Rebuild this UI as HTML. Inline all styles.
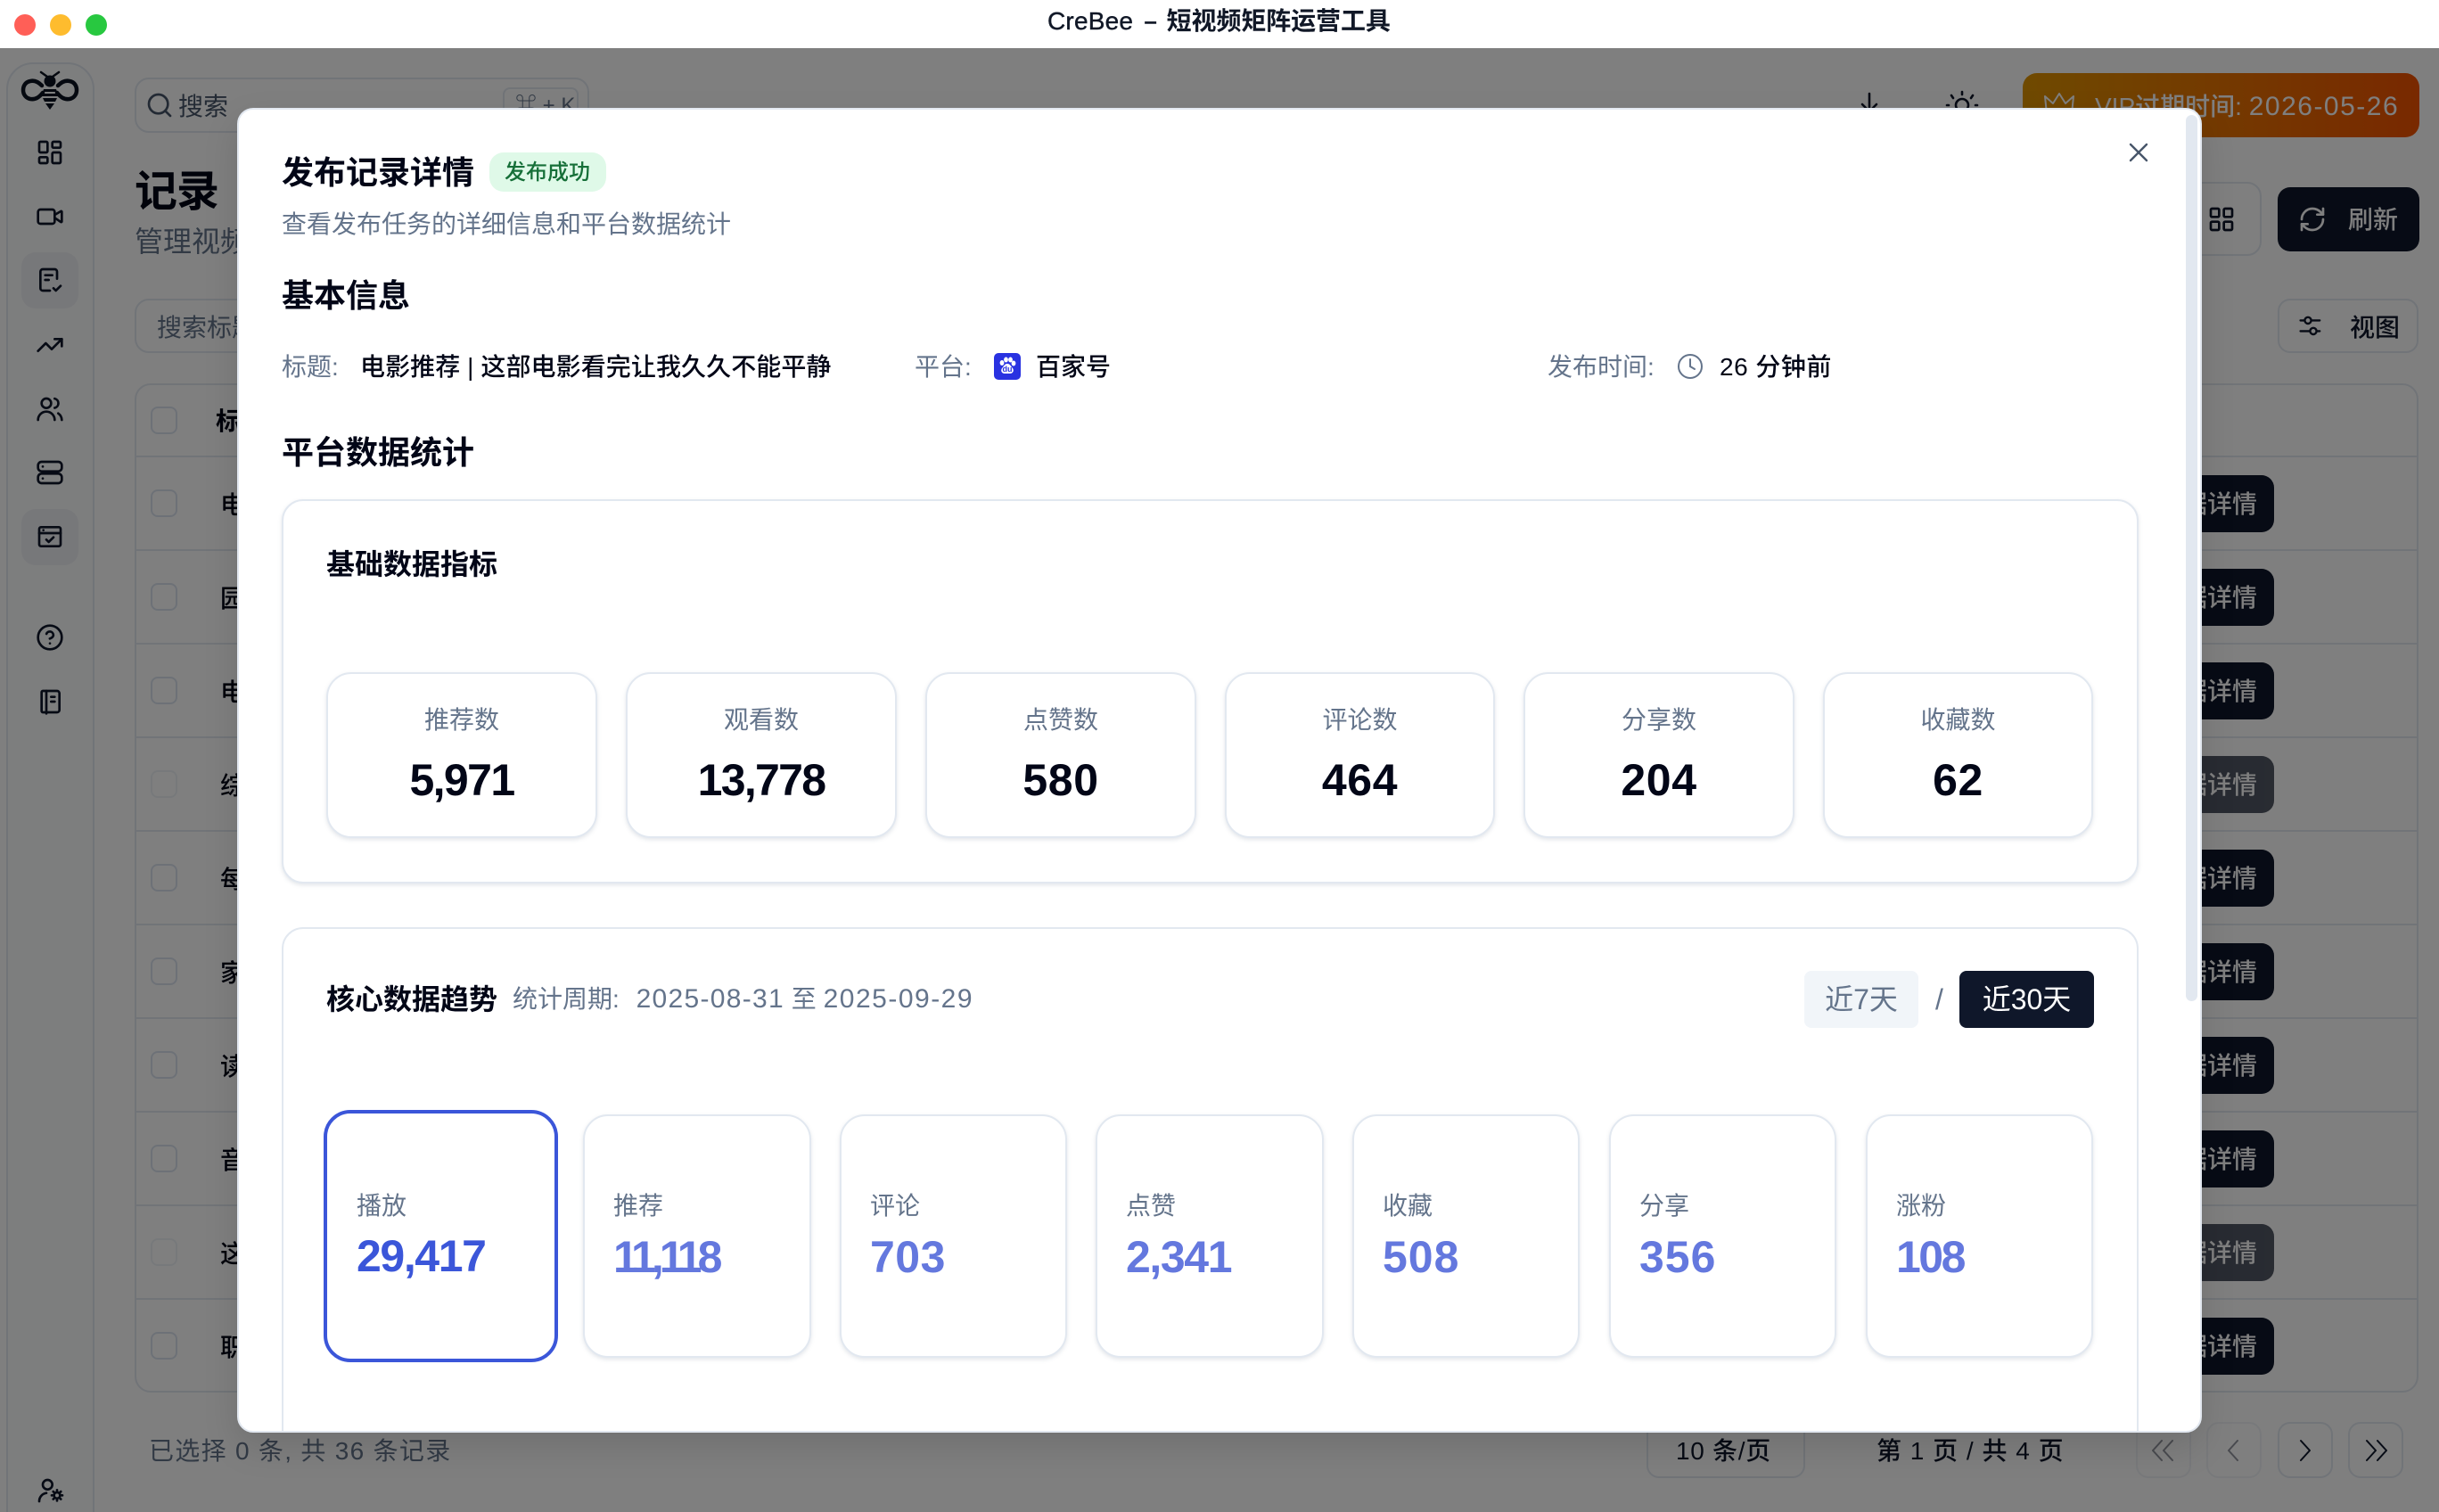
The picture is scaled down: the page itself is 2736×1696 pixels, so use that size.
<!DOCTYPE html>
<html lang="zh">
<head>
<meta charset="utf-8">
<title>CreBee - 短视频矩阵运营工具</title>
<style>
html,body{margin:0;padding:0;width:2736px;height:1696px;overflow:hidden;background:#fff}
body{position:relative;font-family:"Liberation Sans","Noto Sans CJK SC",sans-serif;color:#0f172a}
div,span{box-sizing:border-box}
.a{position:absolute}
.t{position:absolute;white-space:nowrap;line-height:40px;height:40px;font-size:28px;transform:translateY(2px)}
.m{font-weight:500}
.b{font-weight:700}
.g{color:#64748b}
.bd{border:2px solid #e2e8f0}
#app{position:absolute;left:0;top:54px;width:2736px;height:1642px}
#bg{position:absolute;left:0;top:0;width:2736px;height:1696px}
#ov{position:absolute;left:0;top:54px;width:2736px;height:1642px;background:rgba(0,0,0,.5)}
#tb{position:absolute;left:0;top:0;width:2736px;height:54px;background:#fff}
.dot{position:absolute;top:16px;width:24px;height:24px;border-radius:50%}
#modal{position:absolute;left:266px;top:121px;width:2204px;height:1486px;background:#fff;border:2px solid #e2e8f0;border-radius:18px;overflow:hidden;box-shadow:0 16px 40px rgba(0,0,0,.12)}
#in{position:absolute;left:-268px;top:-123px;width:2736px;height:1696px}
.sc{position:absolute;background:#fff;border:2px solid #e2e8f0;border-radius:28px;box-shadow:0 2px 5px rgba(100,116,139,.18)}
.lab{position:absolute;left:0;right:0;text-align:center;line-height:40px;font-size:28px;color:#64748b}
.val{position:absolute;left:0;right:0;text-align:center;line-height:60px;font-size:50px;font-weight:700;color:#020617;letter-spacing:.6px}
.tl{position:absolute;left:32px;top:81px;line-height:40px;font-size:28px;color:#64748b;white-space:nowrap}
.tv{position:absolute;left:32px;top:128px;line-height:60px;font-size:50px;font-weight:700;color:#6478de;white-space:nowrap}
.btn{position:absolute;left:2360px;width:191px;height:64px;background:#0f172a;border-radius:14px;color:#fff;font-size:28px;line-height:66px;font-weight:500;text-align:right;padding-right:19px}
.cb{position:absolute;left:169px;width:30px;height:31px;border:2px solid #dbe3ef;border-radius:8px;background:#fff}
.line{position:absolute;left:151px;width:2562px;height:2px;background:#e2e8f0}
.rt{position:absolute;left:247px;line-height:40px;font-size:28px;font-weight:500;white-space:nowrap;color:#020617;transform:translateY(2px)}
.pg{position:absolute;top:1595px;width:62px;height:63px;border:2px solid #e2e8f0;border-radius:14px;background:#fff}
</style>
</head>
<body>
<div id="app"></div>
<div id="bg">
  <!-- sidebar -->
  <div class="a" style="left:7px;top:70px;width:99px;height:1660px;border:2px solid #e2e8f0;border-radius:30px;background:#fbfcfd"></div>
  <div class="a" style="left:24px;top:283px;width:64px;height:63px;border-radius:16px;background:#eff1f4"></div>
  <div class="a" style="left:24px;top:571px;width:64px;height:63px;border-radius:16px;background:#eff1f4"></div>

  <!-- search -->
  <div class="a bd" style="left:151px;top:87px;width:510px;height:62px;border-radius:16px;background:#fff"></div>
  <div class="t g" style="left:200px;top:98px;color:#475569">搜索</div>
  <div class="a bd" style="left:564px;top:98px;width:85px;height:42px;border-radius:8px"></div>
  <div class="t" style="left:578px;top:97px;font-size:24px;color:#64748b">⌘ + K</div>

  <!-- VIP -->
  <div class="a" style="left:2269px;top:82px;width:445px;height:72px;border-radius:16px;background:linear-gradient(90deg,#df9400,#f25200)"></div>
  <div class="t" style="left:2350px;top:98px;font-size:28px;font-weight:500;color:#fff">VIP过期时间: <span style="font-size:30px;letter-spacing:1.5px">2026-05-26</span></div>

  <!-- heading -->
  <div class="t b" style="left:151px;top:186px;font-size:48px;line-height:56px;height:56px;color:#020617;letter-spacing:-1px">记录</div>
  <div class="t" style="left:151px;top:249px;font-size:32px;color:#64748b">管理视频发布记录</div>

  <!-- toolbar -->
  <div class="a bd" style="left:2300px;top:204px;width:237px;height:83px;border-radius:16px"></div>
  <div class="a" style="left:2555px;top:210px;width:159px;height:72px;border-radius:14px;background:#0f172a"></div>
  <div class="t m" style="left:2634px;top:225px;color:#fff">刷新</div>
  <div class="a bd" style="left:151px;top:335px;width:500px;height:61px;border-radius:16px"></div>
  <div class="t" style="left:176px;top:346px;color:#64748b">搜索标题</div>
  <div class="a bd" style="left:2555px;top:335px;width:158px;height:61px;border-radius:14px"></div>
  <div class="t m" style="left:2636px;top:346px;color:#0f172a">视图</div>

  <!-- table -->
  <div class="a bd" style="left:151px;top:430px;width:2562px;height:1132px;border-radius:18px"></div>
  <div class="line" style="top:511px"></div><div class="line" style="top:616px"></div><div class="line" style="top:721px"></div><div class="line" style="top:826px"></div><div class="line" style="top:931px"></div><div class="line" style="top:1036px"></div><div class="line" style="top:1141px"></div><div class="line" style="top:1246px"></div><div class="line" style="top:1351px"></div><div class="line" style="top:1456px"></div>
  <div class="cb" style="top:456px"></div><div class="rt" style="left:242px;top:451px;font-weight:700">标题</div>
  <div class="cb" style="top:549px"></div><div class="rt" style="top:545px">电影推荐</div>
  <div class="cb" style="top:654px"></div><div class="rt" style="top:650px">园艺</div>
  <div class="cb" style="top:759px"></div><div class="rt" style="top:755px">电影</div>
  <div class="cb" style="top:864px;opacity:.45"></div><div class="rt" style="top:860px">综艺</div>
  <div class="cb" style="top:969px"></div><div class="rt" style="top:965px">每日</div>
  <div class="cb" style="top:1074px"></div><div class="rt" style="top:1070px">家居</div>
  <div class="cb" style="top:1179px"></div><div class="rt" style="top:1175px">读书</div>
  <div class="cb" style="top:1284px"></div><div class="rt" style="top:1280px">音乐</div>
  <div class="cb" style="top:1389px;opacity:.45"></div><div class="rt" style="top:1385px">这部</div>
  <div class="cb" style="top:1494px"></div><div class="rt" style="top:1490px">职场</div>

  <div class="btn" style="top:533px">数据详情</div>
  <div class="btn" style="top:638px">数据详情</div>
  <div class="btn" style="top:743px">数据详情</div>
  <div class="btn" style="top:848px;opacity:.72">数据详情</div>
  <div class="btn" style="top:953px">数据详情</div>
  <div class="btn" style="top:1058px">数据详情</div>
  <div class="btn" style="top:1163px">数据详情</div>
  <div class="btn" style="top:1268px">数据详情</div>
  <div class="btn" style="top:1373px;opacity:.72">数据详情</div>
  <div class="btn" style="top:1478px">数据详情</div>

  <!-- footer -->
  <div class="t" style="left:167px;top:1606px;color:#64748b;letter-spacing:1.3px">已选择 0 条, 共 36 条记录</div>
  <div class="a bd" style="left:1847px;top:1580px;width:178px;height:78px;border-radius:14px"></div>
  <div class="t m" style="left:1880px;top:1606px;color:#0f172a;letter-spacing:.7px">10 条/页</div>
  <div class="t m" style="left:2105px;top:1606px;color:#0f172a;letter-spacing:1px">第 1 页 / 共 4 页</div>
  <div class="pg" style="left:2396px;opacity:.5"></div><div class="pg" style="left:2475px;opacity:.5"></div><div class="pg" style="left:2555px"></div><div class="pg" style="left:2634px"></div>

  <!-- icons -->
  <svg class="a" style="left:0;top:0" width="2736" height="1696" viewBox="0 0 2736 1696" fill="none" stroke="#0f172a" stroke-width="2" stroke-linecap="round" stroke-linejoin="round">
    <!-- logo -->
    <g stroke="#0b1220">
      <path stroke-width="4.5" d="M47 96C42 91 38 90 34 91C28 92 26 97 26 101C26 106 29 110 34 111C40 112 44 109 48 104"/>
      <path stroke-width="4.5" d="M65 96C70 91 74 90 78 91C84 92 86 97 86 101C86 106 83 110 78 111C72 112 68 109 64 104"/>
      <path stroke-width="2.5" d="M53 86L46 81M59 86L66 81"/>
      <circle cx="56" cy="91" r="6.5" fill="#0b1220" stroke="none"/>
      <path stroke="none" fill="#0b1220" d="M49 100H63L64 103H48ZM47 105H65V108H47ZM48 110H64L62 114H50ZM51 116H61L56 123Z"/>
    </g>
    <g transform="translate(40,155) scale(1.333)"><rect x="3" y="3" width="7" height="9" rx="1"/><rect x="14" y="3" width="7" height="5" rx="1"/><rect x="14" y="12" width="7" height="9" rx="1"/><rect x="3" y="16" width="7" height="5" rx="1"/></g>
    <g transform="translate(40,227) scale(1.333)"><rect x="2" y="6" width="14" height="12" rx="2"/><path d="m16 13 5.2 3.5a.5.5 0 0 0 .8-.4V7.9a.5.5 0 0 0-.8-.4L16 10.5"/></g>
    <g transform="translate(40,298) scale(1.333)"><path d="M18 11V5a2 2 0 0 0-2-2H6a2 2 0 0 0-2 2v14a2 2 0 0 0 2 2h6"/><path d="M8 8h6M8 12h3M15 19l2 2 4-4"/></g>
    <g transform="translate(40,371) scale(1.333)"><path d="M22 7l-8.5 8.5-5-5L2 17"/><path d="M16 7h6v6"/></g>
    <g transform="translate(40,443) scale(1.333)"><circle cx="9" cy="7" r="4"/><path d="M2 21a7 7 0 0 1 14 0"/><path d="M16 3.1a4 4 0 0 1 0 7.8M19 15.5a7 7 0 0 1 3 5.5"/></g>
    <g transform="translate(40,514) scale(1.333)"><rect x="2" y="3" width="20" height="8" rx="3"/><rect x="2" y="13" width="20" height="8" rx="3"/><path d="M6 7h.01M6 17h.01"/></g>
    <g transform="translate(40,586) scale(1.333)"><rect x="3" y="4" width="18" height="16" rx="1.5"/><path d="M3 9h18M6.5 6.5h.01M9 14.5l2 2 4-4"/></g>
    <g transform="translate(40,699) scale(1.333)"><circle cx="12" cy="12" r="10"/><path d="M9.1 9a3 3 0 0 1 5.8 1c0 2-3 3-3 3M12 17h.01"/></g>
    <g transform="translate(40,771) scale(1.333)"><path d="M6 3h12a2 2 0 0 1 2 2v14a2 2 0 0 1-2 2H6a1 1 0 0 1-1-1V4a1 1 0 0 1 1-1z"/><path d="M9 3v19M13 8h3M13 12h3"/></g>
    <g transform="translate(40,1656) scale(1.333)"><circle cx="10" cy="7" r="4"/><path d="M3 21a7 7 0 0 1 6-7"/><circle cx="18" cy="16" r="2.5"/><path d="M18 11.5v1.5M18 19v1.5M13.5 16H15M21 16h1.5M14.8 12.8l1 1M20.2 18.2l1 1M14.8 19.2l1-1M20.2 13.8l1-1"/></g>
    <!-- search -->
    <g stroke="#475569" transform="translate(163,102) scale(1.333)"><circle cx="11" cy="11" r="8"/><path d="m21 21-4.3-4.3"/></g>
    <!-- download / sun -->
    <path stroke-width="2.6" d="M2097 105V125M2089 117l8 8 8-8"/>
    <g stroke-width="2.6"><circle cx="2201" cy="118" r="7"/><path d="M2201 103v3M2189 107l2 3M2213 107l-2 3M2184 118h2M2216 118h2"/></g>
    <!-- crown -->
    <path stroke="#fff" stroke-width="2" d="M2296 128l-2-20 9 8 7-11 7 11 9-8-2 20z"/>
    <!-- grid -->
    <g transform="translate(2476,230) scale(1.333)"><rect x="3" y="3" width="7" height="7" rx="1"/><rect x="14" y="3" width="7" height="7" rx="1"/><rect x="14" y="14" width="7" height="7" rx="1"/><rect x="3" y="14" width="7" height="7" rx="1"/></g>
    <!-- refresh -->
    <g stroke="#fff" transform="translate(2578,230) scale(1.333)"><path d="M3 12a9 9 0 0 1 9-9 9.8 9.8 0 0 1 6.7 2.7L21 8"/><path d="M21 3v5h-5"/><path d="M21 12a9 9 0 0 1-9 9 9.8 9.8 0 0 1-6.7-2.7L3 16"/><path d="M8 16H3v5"/></g>
    <!-- view sliders -->
    <g transform="translate(2577,351) scale(1.2)"><path d="M3 7h4M13 7h8M3 17h9M18 17h3"/><circle cx="10" cy="7" r="3"/><circle cx="15" cy="17" r="3"/></g>
    <!-- pagination -->
    <g stroke="#0f172a" opacity=".45"><path d="M2425 1616l-10 11 10 11M2437 1616l-10 11 10 11"/><path d="M2510 1616l-10 11 10 11"/></g>
    <path d="M2581 1616l10 11-10 11"/>
    <path d="M2655 1616l10 11-10 11M2667 1616l10 11-10 11"/>
  </svg>
</div>

<div id="ov"></div>

<div id="tb">
  <div class="dot" style="left:16px;background:#ff5f57"></div>
  <div class="dot" style="left:56px;background:#febc2e"></div>
  <div class="dot" style="left:96px;background:#28c840"></div>
  <div class="t m" style="left:1175px;top:2px;color:#111827;letter-spacing:.2px"><span style="-webkit-text-stroke:.4px #111827">CreBee</span> <span style="display:inline-block;margin:0 5px 0 7px;transform:scaleX(1.8);-webkit-text-stroke:.4px #111827">-</span> <span style="font-weight:700;letter-spacing:-.1px">短视频矩阵运营工具</span></div>
</div>

<div id="modal"><div id="in">
  <div class="t b" style="left:316px;top:172px;font-size:36px;line-height:40px;color:#020617">发布记录详情</div>
  <div class="a" style="left:549px;top:171px;width:131px;height:44px;border-radius:16px;background:#dff9e8"></div>
  <div class="t m" style="left:566px;top:172px;font-size:24px;color:#166f38">发布成功</div>
  <div class="t g" style="left:316px;top:230px">查看发布任务的详细信息和平台数据统计</div>
  <svg class="a" style="left:2386px;top:158px" width="26" height="26" viewBox="0 0 26 26" fill="none" stroke="#475569" stroke-width="2.4" stroke-linecap="round"><path d="M4 4L22 22M22 4L4 22"/></svg>

  <div class="t b" style="left:316px;top:310px;font-size:36px;color:#020617">基本信息</div>

  <div class="t g" style="left:316px;top:390px">标题:</div>
  <div class="t m" style="left:404px;top:390px;color:#020617;letter-spacing:.08px">电影推荐 | 这部电影看完让我久久不能平静</div>
  <div class="t g" style="left:1026px;top:390px">平台:</div>
  <svg class="a" style="left:1115px;top:396px" width="30" height="30" viewBox="0 0 30 30"><rect width="30" height="30" rx="5" fill="#2932e1"/><g fill="#fff"><ellipse cx="9" cy="11" rx="2.4" ry="3"/><ellipse cx="13.5" cy="7.5" rx="2.4" ry="3"/><ellipse cx="18.5" cy="7.5" rx="2.4" ry="3"/><ellipse cx="22" cy="11.5" rx="2.4" ry="3"/><path d="M15 12c3 0 4 3 6 5 2 3 0 6-3 6h-6c-3 0-5-3-3-6 2-2 3-5 6-5z"/></g><text x="15" y="21" text-anchor="middle" font-size="9" font-weight="700" fill="#2932e1" font-family="Liberation Sans">du</text></svg>
  <div class="t m" style="left:1162px;top:390px;color:#020617">百家号</div>
  <div class="t g" style="left:1736px;top:390px">发布时间:</div>
  <svg class="a" style="left:1881px;top:396px" width="30" height="30" viewBox="0 0 30 30" fill="none" stroke="#64748b" stroke-width="2" stroke-linecap="round"><circle cx="15" cy="15" r="13"/><path d="M15 7v8l5 3"/></svg>
  <div class="t m" style="left:1929px;top:390px;color:#020617;letter-spacing:.5px">26 分钟前</div>

  <div class="t b" style="left:316px;top:486px;font-size:36px;color:#020617">平台数据统计</div>

  <!-- card 1 -->
  <div class="a bd" style="left:316px;top:560px;width:2083px;height:431px;border-radius:24px;background:#fff;box-shadow:0 2px 5px rgba(100,116,139,.18)"></div>
  <div class="t b" style="left:366px;top:611px;font-size:32px;color:#020617">基础数据指标</div>

  <div class="sc" style="left:366px;top:754px;width:304px;height:186px"><div class="lab" style="top:32px">推荐数</div><div class="val" style="top:89px;letter-spacing:-1.6px">5,971</div></div>
  <div class="sc" style="left:702px;top:754px;width:304px;height:186px"><div class="lab" style="top:32px">观看数</div><div class="val" style="top:89px;letter-spacing:-1.7px">13,778</div></div>
  <div class="sc" style="left:1038px;top:754px;width:304px;height:186px"><div class="lab" style="top:32px">点赞数</div><div class="val" style="top:89px">580</div></div>
  <div class="sc" style="left:1374px;top:754px;width:303px;height:186px"><div class="lab" style="top:32px">评论数</div><div class="val" style="top:89px">464</div></div>
  <div class="sc" style="left:1709px;top:754px;width:304px;height:186px"><div class="lab" style="top:32px">分享数</div><div class="val" style="top:89px">204</div></div>
  <div class="sc" style="left:2045px;top:754px;width:303px;height:186px"><div class="lab" style="top:32px">收藏数</div><div class="val" style="top:89px">62</div></div>

  <!-- card 2 -->
  <div class="a bd" style="left:316px;top:1040px;width:2083px;height:700px;border-radius:24px;background:#fff"></div>
  <div class="t b" style="left:366px;top:1099px;font-size:32px;color:#020617">核心数据趋势</div>
  <div class="t g" style="left:575px;top:1099px">统计周期: <span style="font-size:30px;letter-spacing:1.3px;margin-left:11px">2025-08-31</span> 至 <span style="font-size:30px;letter-spacing:1.5px">2025-09-29</span></div>
  <div class="a" style="left:2024px;top:1089px;width:128px;height:64px;border-radius:8px;background:#f1f5f9;color:#64748b;font-size:32px;line-height:64px;text-align:center">近7天</div>
  <div class="t g" style="left:2171px;top:1099px;font-size:32px">/</div>
  <div class="a" style="left:2198px;top:1089px;width:151px;height:64px;border-radius:8px;background:#0f172a;color:#fff;font-size:32px;line-height:64px;text-align:center">近30天</div>

  <div class="a" style="left:363px;top:1245px;width:263px;height:283px;border:4px solid #3b56d9;border-radius:30px;background:#fff">
    <div class="tl" style="left:33px;top:84px">播放</div>
    <div class="tv" style="left:33px;top:130px;color:#3b56d9;letter-spacing:-1.4px">29,417</div>
  </div>
  <div class="sc" style="left:654px;top:1250px;width:256px;height:273px"><div class="tl">推荐</div><div class="tv" style="letter-spacing:-5px">11,118</div></div>
  <div class="sc" style="left:942px;top:1250px;width:255px;height:273px"><div class="tl">评论</div><div class="tv" style="letter-spacing:.5px">703</div></div>
  <div class="sc" style="left:1229px;top:1250px;width:256px;height:273px"><div class="tl">点赞</div><div class="tv" style="letter-spacing:-1.4px">2,341</div></div>
  <div class="sc" style="left:1517px;top:1250px;width:255px;height:273px"><div class="tl">收藏</div><div class="tv" style="letter-spacing:1px">508</div></div>
  <div class="sc" style="left:1805px;top:1250px;width:255px;height:273px"><div class="tl">分享</div><div class="tv" style="letter-spacing:1px">356</div></div>
  <div class="sc" style="left:2093px;top:1250px;width:255px;height:273px"><div class="tl">涨粉</div><div class="tv" style="letter-spacing:-2.5px">108</div></div>

  <!-- scrollbar -->
  <div class="a" style="left:2452px;top:129px;width:13px;height:994px;border-radius:7px;background:#e2e8f0"></div>
</div></div>
</body>
</html>
